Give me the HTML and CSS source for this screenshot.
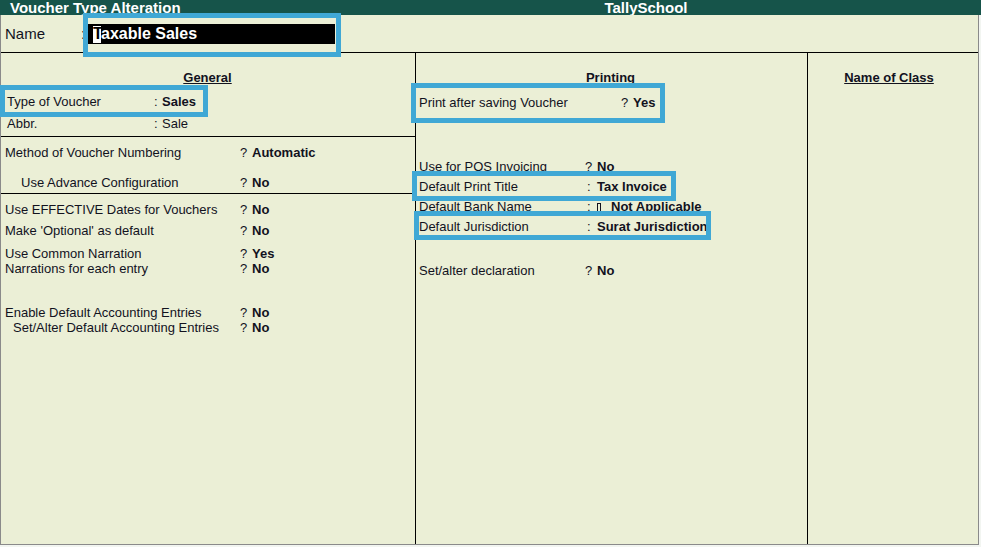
FILE: index.html
```html
<!DOCTYPE html>
<html>
<head>
<meta charset="utf-8">
<link rel="stylesheet" href="styles.css">
</head>
<body>
<div class="app">
  <div class="titlebar">
    <div class="title-left">Voucher Type Alteration</div>
    <div class="title-center">TallySchool</div>
  </div>
  <div class="frame">
    <div class="name-row">
      <span class="name-label">Name</span><span class="name-colon">:</span>
      <div class="name-input"><span class="cursor">T</span>axable Sales</div>
    </div>
    <div class="cols">
      <div class="col col-general">
        <div class="sec sec1">
          <div class="heading">General</div>
          <div class="row r-type"><span class="lbl">Type of Voucher</span><span class="sep">:</span><span class="val">Sales</span></div>
          <div class="row r-abbr"><span class="lbl">Abbr.</span><span class="sep">:</span><span class="val normal">Sale</span></div>
        </div>
        <div class="sec sec2">
          <div class="row"><span class="lbl">Method of Voucher Numbering</span><span class="sep">?</span><span class="val">Automatic</span></div>
          <div class="row r-adv"><span class="lbl indent16">Use Advance Configuration</span><span class="sep">?</span><span class="val">No</span></div>
        </div>
        <div class="sec sec3">
          <div class="row"><span class="lbl">Use EFFECTIVE Dates for Vouchers</span><span class="sep">?</span><span class="val">No</span></div>
          <div class="row r-opt"><span class="lbl">Make 'Optional' as default</span><span class="sep">?</span><span class="val">No</span></div>
          <div class="row r-common"><span class="lbl">Use Common Narration</span><span class="sep">?</span><span class="val">Yes</span></div>
          <div class="row"><span class="lbl">Narrations for each entry</span><span class="sep">?</span><span class="val">No</span></div>
          <div class="row r-enable"><span class="lbl">Enable Default Accounting Entries</span><span class="sep">?</span><span class="val">No</span></div>
          <div class="row"><span class="lbl indent8">Set/Alter Default Accounting Entries</span><span class="sep">?</span><span class="val">No</span></div>
        </div>
      </div>
      <div class="col col-print">
        <div class="heading">Printing</div>
        <div class="row r-after"><span class="lbl w202">Print after saving Voucher</span><span class="sep">?</span><span class="val">Yes</span></div>
        <div class="row r-pos"><span class="lbl">Use for POS Invoicing</span><span class="sep">?</span><span class="val">No</span></div>
        <div class="row r-next"><span class="lbl w168">Default Print Title</span><span class="sep colon">:</span><span class="val">Tax Invoice</span></div>
        <div class="row r-next"><span class="lbl w168">Default Bank Name</span><span class="sep colon">:</span><span class="val"><span class="box-glyph"></span>Not Applicable</span></div>
        <div class="row r-next"><span class="lbl w168">Default Jurisdiction</span><span class="sep colon">:</span><span class="val">Surat Jurisdiction</span></div>
        <div class="row r-decl"><span class="lbl">Set/alter declaration</span><span class="sep">?</span><span class="val">No</span></div>
      </div>
      <div class="col col-class">
        <div class="heading">Name of Class</div>
      </div>
    </div>
  </div>
  <div class="hl hl-name"></div>
  <div class="hl hl-type"></div>
  <div class="hl hl-print"></div>
  <div class="hl hl-title"></div>
  <div class="hl hl-juris"></div>
</div>
</body>
</html>
```

FILE: styles.css
```css
html, body {
  margin: 0;
  padding: 0;
  background: #f2f5f1;
}

.app {
  position: relative;
  width: 981px;
  height: 547px;
  overflow: hidden;
  background: #f2f5f1;
  font-family: "Liberation Sans", Arial, sans-serif;
  color: #12121e;
}

.titlebar {
  display: flex;
  height: 15px;
  background: #16544a;
  color: #ffffff;
  font-weight: bold;
  font-size: 15px;
  line-height: 15px;
  overflow: hidden;
  white-space: nowrap;
}

.title-left {
  width: 301px;
  padding-left: 10px;
}

.title-center {
  flex: 1;
  text-align: center;
}

.frame {
  width: 979px;
  height: 530px;
  box-sizing: border-box;
  border-left: 1px solid #8a8a8a;
  border-right: 1px solid #8a8a8a;
  border-bottom: 1px solid #8a8a8a;
  background: #ebefd6;
  display: flex;
  flex-direction: column;
}

.name-row {
  height: 37px;
  flex: none;
  border-bottom: 1px solid #000;
  display: flex;
  align-items: center;
  padding-left: 4px;
  font-size: 15px;
}

.name-label {
  width: 76px;
}

.name-colon {
  width: 7px;
}

.name-input {
  width: 247px;
  height: 20px;
  box-sizing: border-box;
  background: #000;
  color: #fff;
  font-weight: bold;
  font-size: 16px;
  line-height: 20px;
  padding-left: 5px;
  white-space: pre;
}

.cursor {
  display: inline-block;
  width: 8px;
  height: 17px;
  line-height: 15px;
  background: #fff;
  color: #000;
  overflow: visible;
}

.cols {
  flex: 1;
  display: flex;
}

.col {
  box-sizing: border-box;
}

.col-general {
  width: 415px;
  border-right: 1px solid #000;
}

.col-print {
  width: 392px;
  border-right: 1px solid #000;
  padding-top: 17px;
  padding-left: 3px;
}

.col-class {
  flex: 1;
  padding-top: 17px;
}

.heading {
  font-size: 13px;
  line-height: 15px;
  font-weight: bold;
  text-decoration: underline;
  text-decoration-thickness: 1px;
  text-align: center;
}

.col-general .heading {
  padding-right: 7px;
}

.col-print .heading {
  padding-right: 2px;
  margin-left: -3px;
}

.col-class .heading {
  padding-right: 8px;
}

.sec1 {
  padding: 17px 0 5px 6px;
  border-bottom: 1px solid #000;
}

.sec2 {
  padding: 8px 0 3px 4px;
  border-bottom: 1px solid #000;
}

.sec3 {
  padding: 8px 0 0 4px;
}

.row {
  display: flex;
  font-size: 13px;
  line-height: 15px;
  white-space: pre;
}

.lbl {
  flex: none;
  box-sizing: border-box;
  width: 235px;
}

.sep {
  flex: none;
  width: 12px;
}

.val {
  font-weight: bold;
}

.val.normal {
  font-weight: normal;
}

.sec1 .lbl {
  width: 147px;
}

.sec1 .sep {
  width: 8px;
}

.indent16 {
  padding-left: 16px;
}

.indent8 {
  padding-left: 8px;
}

.r-type { margin-top: 9px; }
.r-abbr { margin-top: 7px; }
.r-adv { margin-top: 15px; }
.r-opt { margin-top: 6px; }
.r-common { margin-top: 8px; }
.r-enable { margin-top: 29px; }

.col-print .lbl {
  width: 166px;
}

.col-print .lbl.w202 {
  width: 202px;
}

.col-print .lbl.w168 {
  width: 168px;
}

.col-print .sep.colon {
  width: 10px;
}

.r-after { margin-top: 10px; }
.r-pos { margin-top: 49px; }
.r-next { margin-top: 5px; }
.r-decl { margin-top: 29px; }

.box-glyph {
  display: inline-block;
  width: 2px;
  height: 7px;
  border: 1px solid #12121e;
  margin-right: 10px;
  vertical-align: -1px;
}

.hl {
  position: absolute;
  box-sizing: border-box;
  border: 5px solid #40a8d5;
}

.hl-name { left: 83px; top: 13px; width: 258px; height: 44px; }
.hl-type { left: 0; top: 85px; width: 208px; height: 32px; }
.hl-print { left: 411px; top: 83px; width: 254px; height: 40px; }
.hl-title { left: 412px; top: 171px; width: 264px; height: 30px; }
.hl-juris { left: 414px; top: 211px; width: 297px; height: 29px; }
```
